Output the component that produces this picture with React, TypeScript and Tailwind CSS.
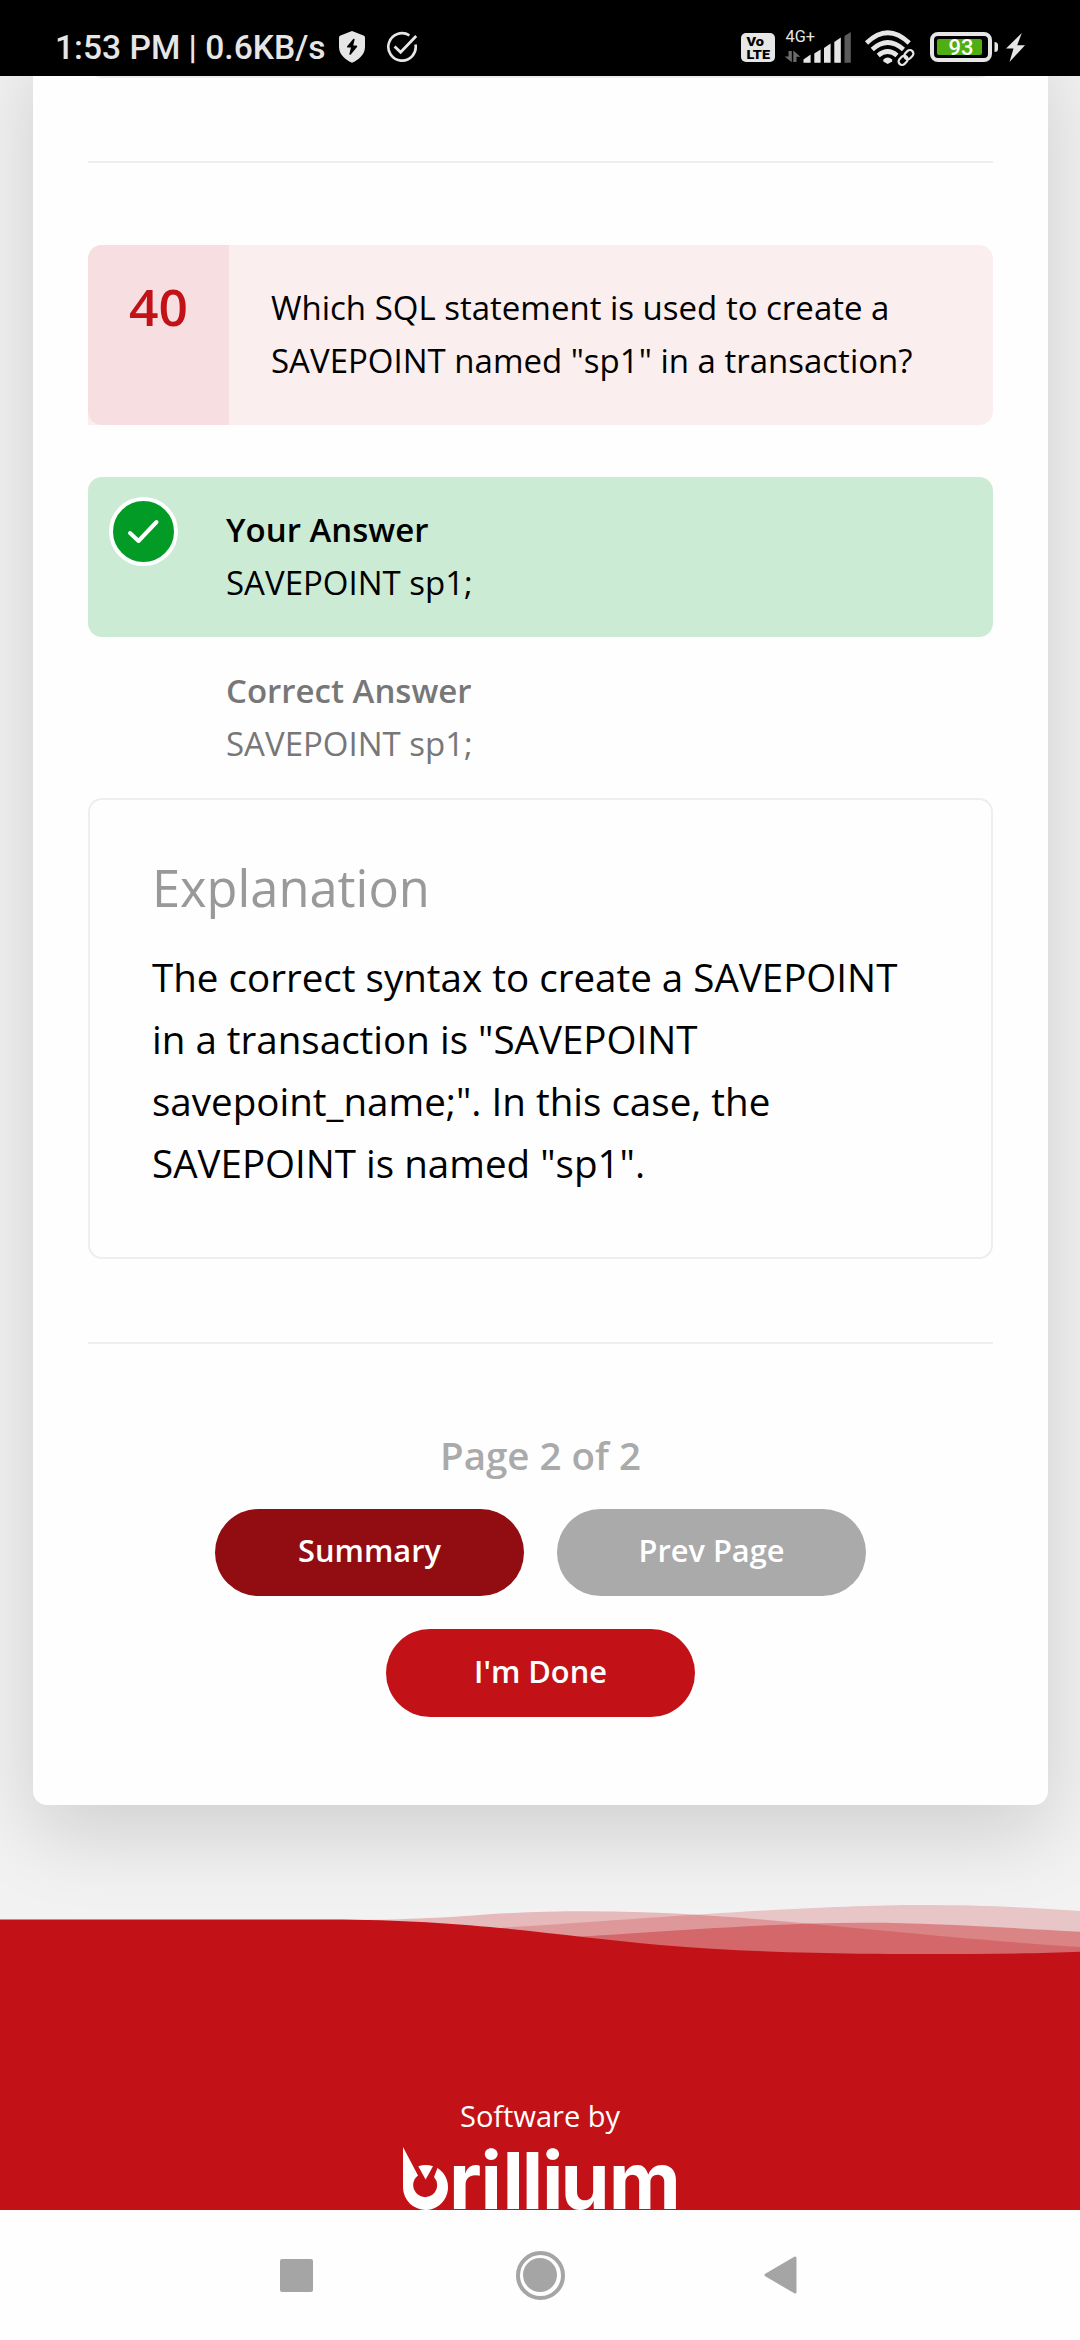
import React from "react";

function StatusLeftIcons() {
  return (
    <>
      <svg className="ml-[13px] h-[34px] w-[28px]" viewBox="0 0 28 34">
        <path d="M14 1 L25.5 5.4 Q27 6 27 7.6 V17 C27 25 20 30 14 32.8 C8 30 1 25 1 17 V7.6 Q1 6 2.5 5.4 Z" fill="#e6e6e6" />
        <path d="M15.8 9.5 L9.8 16.8 H14 L12.2 24 L18.4 16.4 H14.2 Z" fill="#000" stroke="#000" strokeWidth="1.6" strokeLinejoin="round" />
      </svg>
      <svg className="ml-[20px] h-[34px] w-[34px]" viewBox="0 0 34 34">
        <path d="M23.4 5.4 A13.7 13.7 0 1 0 29.5 14.5" fill="none" stroke="#e6e6e6" strokeWidth="2.6" />
        <path d="M8.6 16.4 L14.6 22.2 L30.2 6" fill="none" stroke="#e6e6e6" strokeWidth="2.8" />
      </svg>
    </>
  );
}

function StatusRightIcons() {
  return (
    <svg className="h-[40px] w-[300px]" viewBox="740 28 300 40">
      <rect x="741" y="33" width="34" height="29" rx="5" fill="#e6e6e6" />
      <g fill="#000" fontFamily="Roboto" fontWeight="900" fontSize="13.5">
        <text x="746.5" y="46" textLength="17.5" lengthAdjust="spacingAndGlyphs">Vo</text>
        <text x="746.5" y="58.5" textLength="23.5" lengthAdjust="spacingAndGlyphs">LTE</text>
      </g>
      <text x="785.6" y="42" fontSize="16" fontFamily="Roboto" fill="#e6e6e6" textLength="29.5" lengthAdjust="spacingAndGlyphs">4G+</text>
      <path d="M788.5 51 H791.8 V62.3 L784.6 56.5 H788.5 Z M793.3 62 V50.6 L800.3 56.8 H796.5 V62 Z" fill="#6b6b6b" />
      <g fill="#e6e6e6">
        <path d="M803.5 62.8 V59.5 L810.6 54.5 V62.8 Z" />
        <path d="M814.3 62.8 V53.5 L820.6 49.5 V62.8 Z" />
        <path d="M824 62.8 V48 L830.6 43.5 V62.8 Z" />
        <path d="M834.3 62.8 V42 L840.8 37.5 V62.8 Z" />
      </g>
      <path d="M844.5 62.8 V36 L850.8 32 V62.8 Z" fill="#5b5b5b" />
      <g fill="none" stroke="#e6e6e6" strokeWidth="4.6">
        <path d="M866.5 43 Q887.7 22.5 909.2 43" />
        <path d="M872.2 49.5 Q887.7 35.5 903.5 49.5" />
        <path d="M878.2 55.5 Q887.7 47.5 897 55.5" />
      </g>
      <path d="M883.3 59.5 Q887.7 55.5 892.2 59.5 V61.5 L887.7 64 L883.3 61.5 Z" fill="#e6e6e6" />
      <g transform="rotate(-45 906 57.5)">
        <rect x="896" y="52" width="20" height="11" rx="5.5" fill="#000" />
        <g fill="none" stroke="#e6e6e6" strokeWidth="2.2">
          <rect x="897" y="54" width="10" height="7" rx="3.5" />
          <rect x="905" y="54" width="10" height="7" rx="3.5" />
        </g>
      </g>
      <rect x="932" y="34" width="58" height="26" rx="6" fill="#000" stroke="#e6e6e6" strokeWidth="4" />
      <rect x="937" y="39" width="45" height="16" rx="2" fill="#4fae13" />
      <text x="948.5" y="55" fontSize="22" fontWeight="500" fontFamily="Roboto" fill="#fff" textLength="25" lengthAdjust="spacingAndGlyphs">93</text>
      <path d="M994.5 42 Q998 42.3 998 45 V49 Q998 51.8 994.5 52 Z" fill="#e6e6e6" />
      <path d="M1021.8 33 L1006 48.5 H1013.5 L1009.5 62 L1025 45.3 H1017.2 Z" fill="#e6e6e6" />
    </svg>
  );
}

function StatusBar() {
  return (
    <header className="flex h-[76px] shrink-0 justify-between bg-black pt-[28px] pl-[55px]">
      <div className="flex h-[38px] items-center">
        <span className="w-[270px] pt-[2px] font-[Roboto,sans-serif] text-[33.6px] leading-[40px] font-medium whitespace-nowrap text-[#e6e6e6]">
          1:53 PM | 0.6KB/s
        </span>
        <StatusLeftIcons />
      </div>
      <div className="mr-[40px]">
        <StatusRightIcons />
      </div>
    </header>
  );
}

function Question() {
  return (
    <section className="mt-[82px] flex h-[180px] rounded-[14px] rounded-bl-none bg-[#faeeee]">
      <div className="w-[141px] rounded-l-[14px] bg-[#f6dee1] pt-[26px] text-center text-[51.5px] leading-[70px] font-semibold text-[#c31217]">
        40
      </div>
      <p className="flex-1 pt-[36px] pl-[42px] text-[33px] leading-[53px] text-black">
        Which SQL statement is used to create a<br />
        SAVEPOINT named "sp1" in a transaction?
      </p>
    </section>
  );
}

function Answers() {
  return (
    <>
      <section className="mt-[52px] flex h-[160px] rounded-[14px] bg-[#ccebd4] pt-[20px] pl-[21px] text-[33px] leading-[53px] text-black">
        <div className="flex size-[69px] items-center justify-center rounded-full border-4 border-white bg-[#029b25]">
          <svg className="h-[26px] w-[34px]" viewBox="0 0 34 26">
            <path d="M3 14 L11.5 22 L29.5 3" fill="none" stroke="#fff" strokeWidth="4" strokeLinecap="round" strokeLinejoin="round" />
          </svg>
        </div>
        <div className="mt-[6px] ml-[48px]">
          <h3 className="font-semibold">Your Answer</h3>
          <p>SAVEPOINT sp1;</p>
        </div>
      </section>
      <section className="mt-[27px] pl-[138px] text-[33px] leading-[53px] text-[#777777]">
        <h3 className="font-semibold">Correct Answer</h3>
        <p>SAVEPOINT sp1;</p>
      </section>
    </>
  );
}

function Explanation() {
  return (
    <section className="mt-[28px] h-[461px] rounded-[14px] border-2 border-[#eeeeee] pt-[53px] pl-[62px]">
      <h2 className="text-[50.6px] leading-[70px] text-[#999999]">Explanation</h2>
      <p className="mt-[23px] text-[38.55px] leading-[62px] whitespace-nowrap text-black">
        The correct syntax to create a SAVEPOINT
        <br />
        in a transaction is "SAVEPOINT
        <br />
        savepoint_name;". In this case, the
        <br />
        SAVEPOINT is named "sp1".
      </p>
    </section>
  );
}

function Pager() {
  return (
    <nav className="flex flex-col items-center text-[30.8px] font-semibold text-white">
      <p className="mt-[80px] text-[38.5px] leading-[62px] text-[#aaaaaa]">Page 2 of 2</p>
      <div className="mt-[23px] flex gap-[33px]">
        <button className="h-[87px] w-[309px] rounded-full bg-[#910d12] pb-[4px]">Summary</button>
        <button className="h-[87px] w-[309px] rounded-full bg-[#aaaaaa] pb-[4px]">Prev Page</button>
      </div>
      <button className="mt-[33px] h-[88px] w-[309px] rounded-full bg-[#c31217] pb-[3px]">I'm Done</button>
    </nav>
  );
}

function Waves() {
  return (
    <svg className="h-[60px] w-[1080px] shrink-0" viewBox="0 1900 1080 60">
      <g fill="#c31217">
        <path fillOpacity="0.25" d="M340 1920 C400 1920 440 1918 492 1914 C560 1910 630 1910.5 700 1915 C790 1920 950 1939 1080 1947 V1960 H340 Z" />
        <path fillOpacity="0.2" d="M340 1937 C400 1934 520 1927 604 1921 C690 1915 830 1905 920 1905 C980 1905 1030 1907.5 1080 1911 V1960 H340 Z" />
        <path fillOpacity="0.36" d="M400 1947 C470 1943 540 1939 581 1936.5 C660 1932 770 1923 862 1922.7 C930 1922.5 1010 1928 1080 1931.7 V1960 H400 Z" />
        <path d="M0 1919.4 H330 C470 1919.5 560 1936 660 1945 C760 1954 880 1954 925 1954 C980 1954 1040 1953.5 1080 1951.7 V1960 H0 Z" />
      </g>
    </svg>
  );
}

function BrilliumLogo() {
  return (
    <svg className="h-[64px] w-[276px] text-white" viewBox="403 2146 276 64" fill="currentColor">
      <path d="M403 2147 L418 2175.5 A12 12 0 1 0 434 2177 L437.5 2168 A22.8 22.8 0 0 1 425.9 2210 A22.8 22.8 0 0 1 403 2188 Z" />
      <path d="M418.3 2166.3 Q425.5 2163.6 433 2166.3 L425.6 2179.5 Z" />
      <text x="449 480.5 502.5 521.7 542 560.5 608.8" y="2209" fontFamily="Inter" fontWeight="700" fontSize="79">
        rillium
      </text>
    </svg>
  );
}

function Footer() {
  return (
    <footer className="mt-[95px]">
      <Waves />
      <div className="flex h-[250px] flex-col items-center bg-[#c31217] pt-[136px]">
        <p className="text-[29px] leading-[40px] text-white">Software by</p>
        <div className="mt-[10px] ml-[1px]">
          <BrilliumLogo />
        </div>
      </div>
    </footer>
  );
}

function NavigationBar() {
  return (
    <nav className="flex h-[130px] shrink-0 items-center justify-between bg-[#fefefe] pr-[283px] pl-[280px]">
      <div className="size-[33px] rounded-[2px] bg-[#a5a5a5]" />
      <div className="ml-[3px] flex size-[49px] items-center justify-center rounded-full border-4 border-[#a5a5a5]">
        <div className="size-[34px] rounded-full bg-[#a5a5a5]" />
      </div>
      <svg className="h-[38px] w-[33px]" viewBox="0 0 33 38">
        <path d="M2 19 L31 2 V36 Z" fill="#a5a5a5" stroke="#a5a5a5" strokeWidth="3" strokeLinejoin="round" />
      </svg>
    </nav>
  );
}

export default function App() {
  return (
    <div className="flex h-[2340px] w-[1080px] flex-col overflow-hidden font-['Open_Sans','Noto_Sans',sans-serif]">
      <StatusBar />
      <main className="flex h-[2134px] shrink-0 flex-col overflow-hidden bg-[#f2f2f2]">
        <div className="-mt-[40px] ml-[33px] h-[1769px] w-[1015px] shrink-0 rounded-[14px] bg-[#fefefe] px-[55px] pt-[2px] shadow-[0_27px_82px_rgba(0,0,0,0.15)]">
          <div className="h-[40px] rounded-b-[14px] border-2 border-t-0 border-[#eeeeee]" />
          <div className="mt-[83px] h-[2px] bg-[#eeeeee]" />
          <Question />
          <Answers />
          <Explanation />
          <div className="mt-[83px] h-[2px] bg-[#eeeeee]" />
          <Pager />
        </div>
        <Footer />
      </main>
      <NavigationBar />
    </div>
  );
}
